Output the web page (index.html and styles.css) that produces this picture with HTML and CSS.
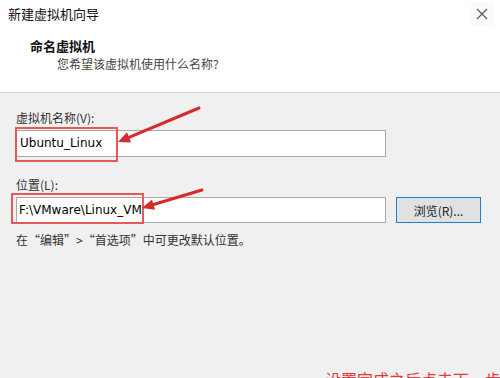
FILE: index.html
```html
<!DOCTYPE html>
<html lang="zh-CN">
<head>
  <meta charset="utf-8">
  <title>新建虚拟机向导</title>
  <link rel="stylesheet" href="styles.css">
</head>
<body>
  <!-- Wizard header -->
  <div class="header">
    <div class="title-bar">
      <span class="title">新建虚拟机向导</span>
      <span class="close-button">
        <svg width="12" height="12" viewBox="0 0 12 12"><path d="M1 1 L11 11 M11 1 L1 11" stroke="#555" stroke-width="1.1" fill="none"/></svg>
      </span>
    </div>
    <h1 class="heading">命名虚拟机</h1>
    <p class="subheading">您希望该虚拟机使用什么名称?</p>
  </div>

  <!-- Form -->
  <div class="content">
    <label class="field-label">虚拟机名称(V):</label>
    <div class="field-row">
      <div class="text-box name-box">Ubuntu_Linux<span class="red-box red-box-name"></span></div>
    </div>

    <label class="field-label second">位置(L):</label>
    <div class="field-row">
      <div class="text-box path-box">F:\VMware\Linux_VM<span class="red-box red-box-path"></span></div>
      <button class="browse-button">浏览(R)...</button>
    </div>

    <p class="hint">在“编辑”&gt;“首选项”中可更改默认位置。</p>

    <p class="note">设置完成之后点击下一步</p>
  </div>

  <!-- Annotation arrows -->
  <svg class="arrows" width="500" height="378" viewBox="0 0 500 378">
    <line x1="199" y1="108" x2="129" y2="137.4" stroke="#d62b2b" stroke-width="3" stroke-linecap="round"/>
    <polygon points="118,142 131,142.6 127,132.2" fill="#d62b2b"/>
    <line x1="202" y1="190" x2="153.5" y2="204.5" stroke="#d62b2b" stroke-width="3" stroke-linecap="round"/>
    <polygon points="142,208 155,209.8 152,199.4" fill="#d62b2b"/>
  </svg>
</body>
</html>
```

FILE: styles.css
```css
html, body {
  margin: 0;
  width: 500px;
  height: 378px;
  overflow: hidden;
}

body {
  position: relative;
  background-color: #f0f0f0;
  font-family: "Noto Sans CJK SC", "Noto Sans", sans-serif;
  color: #222;
}

.header {
  height: 93px;
  box-sizing: border-box;
  background-color: #fff;
  border-bottom: 1px solid #d6d6d6;
}

.title-bar {
  display: flex;
  justify-content: space-between;
  align-items: center;
  height: 28px;
  padding-left: 8px;
}

.title {
  font-size: 13px;
  line-height: 18px;
  color: #111;
}

.close-button {
  display: flex;
  align-items: center;
  justify-content: center;
  width: 22px;
  height: 24px;
  margin-right: 7px;
  background-color: #fafafa;
}

.heading {
  margin: 10px 0 0 30px;
  font-size: 13px;
  line-height: 16px;
  font-weight: bold;
  color: #111;
}

.subheading {
  margin: 2px 0 0 57px;
  font-size: 12px;
  line-height: 16px;
  color: #444;
}

.content {
  padding: 0 16px;
}

.field-label {
  display: block;
  margin-top: 17px;
  font-size: 12px;
  line-height: 16px;
  color: #333;
}

.field-label.second {
  margin-top: 20px;
}

.field-row {
  display: flex;
  gap: 10px;
  margin-top: 4px;
}

.text-box {
  position: relative;
  width: 370px;
  box-sizing: border-box;
  background-color: #fff;
  border: 1px solid #a8a8a8;
  font-family: "DejaVu Sans", "Noto Sans", sans-serif;
  font-size: 12px;
  color: #000;
  padding-left: 3px;
}

.name-box {
  height: 27px;
  line-height: 25px;
}

.path-box {
  height: 26px;
  line-height: 24px;
  padding-left: 2px;
}

.red-box {
  position: absolute;
  display: block;
  box-sizing: border-box;
  border: 2px solid #e25a5a;
}

.red-box-name {
  left: -2px;
  top: -4px;
  width: 103px;
  height: 35px;
}

.red-box-path {
  left: -6px;
  top: -5px;
  width: 133px;
  height: 31px;
}

.browse-button {
  width: 85px;
  height: 26px;
  box-sizing: border-box;
  border: 1px solid #1a7fd6;
  background-color: #e1e1e1;
  font-family: "Noto Sans CJK SC", sans-serif;
  font-size: 12px;
  color: #222;
  padding: 0;
}

.hint {
  margin: 9px 0 0;
  font-size: 12px;
  line-height: 16px;
  color: #333;
}

.note {
  margin: 121px 0 0 309px;
  font-size: 16px;
  line-height: 20px;
  color: #e03a3a;
  white-space: nowrap;
}

.arrows {
  position: absolute;
  left: 0;
  top: 0;
  pointer-events: none;
}
```
